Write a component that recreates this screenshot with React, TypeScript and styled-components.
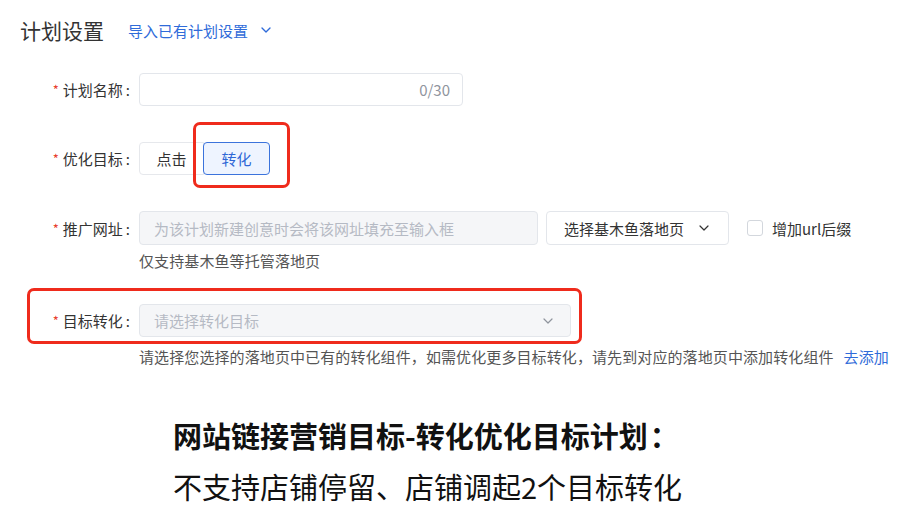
import React from "react";
import styled, { createGlobalStyle } from "styled-components";
import { ChevronDown } from "lucide-react";

const Global = createGlobalStyle`
  html, body { margin: 0; padding: 0; background: #fff; }
  body { font-family: "Noto Sans CJK SC", "Noto Sans", sans-serif; color: #333; }
  * { box-sizing: border-box; }
`;

const Page = styled.div`
  width: 906px;
  height: 516px;
  padding: 16px 20px 0 20px;
  overflow: hidden;
`;

const Header = styled.div`
  display: flex;
  align-items: center;
  height: 28px;
  gap: 16px;
`;

const Title = styled.div`
  font-size: 21px;
  line-height: 28px;
  color: #333;
  width: 92px;
`;

const Link = styled.div`
  display: flex;
  align-items: center;
  gap: 6px;
  font-size: 15px;
  color: #2f6bd9;
`;

const Form = styled.div`
  display: flex;
  flex-direction: column;
  margin-top: 29px;
`;

const Row = styled.div<{ $mt?: number }>`
  position: relative;
  display: flex;
  align-items: flex-start;
  margin-top: ${(p) => p.$mt ?? 0}px;
`;

const Label = styled.div<{ $h?: number }>`
  flex-shrink: 0;
  width: 111px;
  margin-right: 8px;
  height: ${(p) => p.$h ?? 33}px;
  display: flex;
  align-items: center;
  justify-content: flex-end;
  font-size: 15px;
  color: #333;
  white-space: nowrap;
`;

const Star = styled.span`
  color: #e8402f;
  font-size: 13px;
  margin-right: 4px;
`;

const Colon = styled.span`
  margin-left: 3px;
  margin-right: 1px;
`;

const Field = styled.div`
  display: flex;
  flex-direction: column;
`;

const Line = styled.div`
  display: flex;
  align-items: center;
  gap: 8px;
`;

const Input = styled.div<{ $w: number; $h?: number; $filled?: boolean; $right?: boolean }>`
  width: ${(p) => p.$w}px;
  height: ${(p) => p.$h ?? 33}px;
  border: 1px solid #e3e6eb;
  border-radius: 4px;
  background: ${(p) => (p.$filled ? "#f5f6f8" : "#fff")};
  display: flex;
  align-items: center;
  justify-content: ${(p) => (p.$right ? "flex-end" : "space-between")};
  padding: 0 14px;
  font-size: 15px;
  color: #b5bac4;
  white-space: nowrap;
`;

const Counter = styled.span`
  color: #8f949d;
  font-size: 15px;
  margin-right: -2px;
`;

const Segment = styled.div`
  display: flex;
  height: 33px;
`;

const SegBtn = styled.div<{ $active?: boolean; $w: number }>`
  width: ${(p) => p.$w}px;
  height: 33px;
  display: flex;
  align-items: center;
  justify-content: center;
  font-size: 15px;
  border: 1px solid ${(p) => (p.$active ? "#3b73dc" : "#e6e8ec")};
  background: ${(p) => (p.$active ? "#eef4ff" : "#fff")};
  color: ${(p) => (p.$active ? "#2f67d6" : "#333")};
  border-radius: ${(p) => (p.$active ? "4px" : "4px 0 0 4px")};
  margin-left: ${(p) => (p.$active ? "-1px" : "0")};
`;

const SelectBtn = styled.div`
  width: 183px;
  height: 34px;
  border: 1px solid #e3e6eb;
  border-radius: 4px;
  background: #fff;
  display: flex;
  align-items: center;
  padding-left: 17px;
  gap: 12px;
  font-size: 15px;
  color: #333;
`;

const Check = styled.label`
  display: flex;
  align-items: center;
  gap: 9px;
  margin-left: 10px;
  font-size: 15px;
  color: #333;
`;

const Box = styled.span`
  width: 16px;
  height: 16px;
  border: 1px solid #d3d7dd;
  border-radius: 3px;
  background: #fff;
`;

const Help = styled.div<{ $mt: number }>`
  margin-top: ${(p) => p.$mt}px;
  font-size: 15px;
  line-height: 20px;
  color: #555;
  white-space: nowrap;
  display: flex;
  gap: 10px;
  letter-spacing: 0.1px;
`;

const HelpLink = styled.span`
  color: #2f6bd9;
`;

const Highlight = styled.div<{ $l: number; $t: number; $w: number; $h: number }>`
  position: absolute;
  left: ${(p) => p.$l}px;
  top: ${(p) => p.$t}px;
  width: ${(p) => p.$w}px;
  height: ${(p) => p.$h}px;
  border: 3px solid #ef2b1c;
  border-radius: 7px;
  pointer-events: none;
`;

const Note = styled.div`
  margin-top: 48px;
  padding-left: 153px;
  display: flex;
  flex-direction: column;
  color: #111;
`;

const NoteLine = styled.div<{ $bold?: boolean }>`
  font-size: 29px;
  line-height: 40px;
  font-weight: ${(p) => (p.$bold ? 700 : 400)};
  margin-top: ${(p) => (p.$bold ? 0 : 11)}px;
  white-space: nowrap;
`;

const WideColon = styled.span`
  margin-left: 2px;
`;

export default function App() {
  return (
    <>
      <Global />
      <Page>
        <Header>
          <Title>计划设置</Title>
          <Link>
            导入已有计划设置
            <ChevronDown size={16} strokeWidth={2} style={{ marginLeft: 4 }} />
          </Link>
        </Header>
        <Form>
          <Row>
            <Label>
              <Star>*</Star>计划名称<Colon>:</Colon>
            </Label>
            <Input $w={324} $right>
              <Counter>0/30</Counter>
            </Input>
          </Row>
          <Row $mt={36}>
            <Label>
              <Star>*</Star>优化目标<Colon>:</Colon>
            </Label>
            <Segment>
              <SegBtn $w={65}>点击</SegBtn>
              <SegBtn $w={67} $active>
                转化
              </SegBtn>
            </Segment>
            <Highlight $l={173} $t={-20} $w={97} $h={66} />
          </Row>
          <Row $mt={36}>
            <Label $h={34}>
              <Star>*</Star>推广网址<Colon>:</Colon>
            </Label>
            <Field>
              <Line>
                <Input $w={399} $h={34} $filled>
                  为该计划新建创意时会将该网址填充至输入框
                </Input>
                <SelectBtn>
                  选择基木鱼落地页
                  <ChevronDown size={16} strokeWidth={1.8} color="#333" />
                </SelectBtn>
                <Check>
                  <Box />
                  增加url后缀
                </Check>
              </Line>
              <Help $mt={6}>仅支持基木鱼等托管落地页</Help>
            </Field>
          </Row>
          <Row $mt={33}>
            <Label>
              <Star>*</Star>目标转化<Colon>:</Colon>
            </Label>
            <Field>
              <Input $w={432} $filled>
                请选择转化目标
                <ChevronDown size={16} strokeWidth={1.8} color="#8f949d" />
              </Input>
              <Help $mt={10}>
                请选择您选择的落地页中已有的转化组件，如需优化更多目标转化，请先到对应的落地页中添加转化组件
                <HelpLink>去添加</HelpLink>
              </Help>
            </Field>
            <Highlight $l={7} $t={-16} $w={555} $h={56} />
          </Row>
        </Form>
        <Note>
          <NoteLine $bold>
            网站链接营销目标-转化优化目标计划<WideColon>：</WideColon>
          </NoteLine>
          <NoteLine>不支持店铺停留、店铺调起2个目标转化</NoteLine>
        </Note>
      </Page>
    </>
  );
}
